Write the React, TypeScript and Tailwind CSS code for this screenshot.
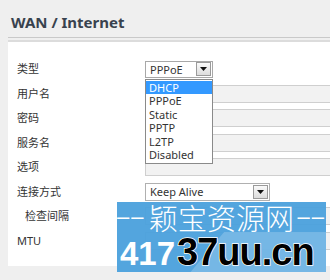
import React from "react";

const labelFont = "font-['Noto_Sans','Noto_Sans_CJK_SC',sans-serif]";

const rows = [
  { label: "类型", kind: "select" },
  { label: "用户名", kind: "input" },
  { label: "密码", kind: "input" },
  { label: "服务名", kind: "input" },
  { label: "选项", kind: "input" },
  { label: "连接方式", kind: "keep" },
  { label: "检查间隔", kind: "input", indent: true },
  { label: "MTU", kind: "input" },
];

const options = ["DHCP", "PPPoE", "Static", "PPTP", "L2TP", "Disabled"];

function Arrow() {
  return (
    <span className="w-[15px] h-[14px] mr-[1px] border border-[#9a9a9a] bg-gradient-to-b from-[#fafafa] to-[#dcdcdc] flex items-center justify-center">
      <svg width="7" height="4" viewBox="0 0 7 4">
        <path d="M0 0h7L3.5 4z" fill="#111" />
      </svg>
    </span>
  );
}

export default function App() {
  return (
    <div className={`relative w-[330px] h-[280px] overflow-hidden bg-[#efefef] ${labelFont}`}>
      <div className="h-[37px] pl-[11px] pt-[12px] text-[15px] font-bold text-[#38424e] leading-[20px]">
        WAN / Internet
      </div>
      <div className="ml-[8px] h-[5px] border-t border-[#c9c9c9] border-b-2 border-b-[#dcdcdc]" />

      <div className="ml-[8px] h-[224px] bg-white pt-[15px]">
        {rows.map((r) => (
          <div key={r.label} className="h-[24.5px] flex items-center">
            <div
              className={`w-[137px] text-[11px] text-[#333] ${r.indent ? "pl-[17px]" : "pl-[9px]"}`}
            >
              {r.label}
            </div>
            {r.kind === "select" && (
              <div className="relative w-[68px] h-[17px] border border-[#a8a8a8] bg-white flex items-center justify-between">
                <span className="pl-[4px] text-[11px] text-[#333] leading-none">PPPoE</span>
                <Arrow />
                <div className="absolute left-[-1px] top-[17px] w-[68px] border border-[#8a8a8a] bg-white z-10 py-[1px]">
                  {options.map((o, i) => (
                    <div
                      key={o}
                      className={`h-[13.5px] pl-[3px] text-[11px] leading-[13.5px] ${
                        i === 0 ? "bg-[#3399ff] text-white" : "text-[#333]"
                      }`}
                    >
                      {o}
                    </div>
                  ))}
                </div>
              </div>
            )}
            {r.kind === "keep" && (
              <div className="w-[125px] h-[18px] border border-[#b0b0b0] bg-white flex items-center justify-between">
                <span className="pl-[4px] text-[11px] text-[#333] leading-none">Keep Alive</span>
                <Arrow />
              </div>
            )}
            {r.kind === "input" && (
              <div className="flex-1 h-[18px] border-y border-[#cfcfcf] border-l bg-[#f2f2f2]" />
            )}
          </div>
        ))}
      </div>

      {/* watermark */}
      <div className="absolute left-[117px] top-[202px] w-[209px] h-[70px] overflow-hidden bg-[#4aa0dc]/95">
        <div className="absolute left-[40px] top-[30px] w-[240px] h-[80px] bg-[#8cc3ea]/60 -skew-x-[40deg] origin-bottom-left" />
        <div className="absolute left-0 top-0 w-full flex items-center justify-between text-white text-[29px] leading-[30px] whitespace-nowrap">
          <span className="font-['Liberation_Sans',sans-serif] text-[22px] tracking-[2px]">––</span>
          <span className="font-['Noto_Sans_CJK_SC',serif] font-light">颖宝资源网</span>
          <span className="font-['Liberation_Sans',sans-serif] text-[22px] tracking-[2px]">––</span>
        </div>
        <div className="absolute left-[3px] top-[34px] text-white font-['Liberation_Sans',sans-serif] font-bold text-[33px] leading-[36px]">
          417
        </div>
        <div className="absolute left-[60px] top-[29px] text-black font-['Liberation_Sans',sans-serif] font-bold text-[38px] leading-[42px] tracking-[-1px] [-webkit-text-stroke:1.5px_white] [paint-order:stroke_fill]">
          37uu.cn
        </div>
      </div>
    </div>
  );
}
